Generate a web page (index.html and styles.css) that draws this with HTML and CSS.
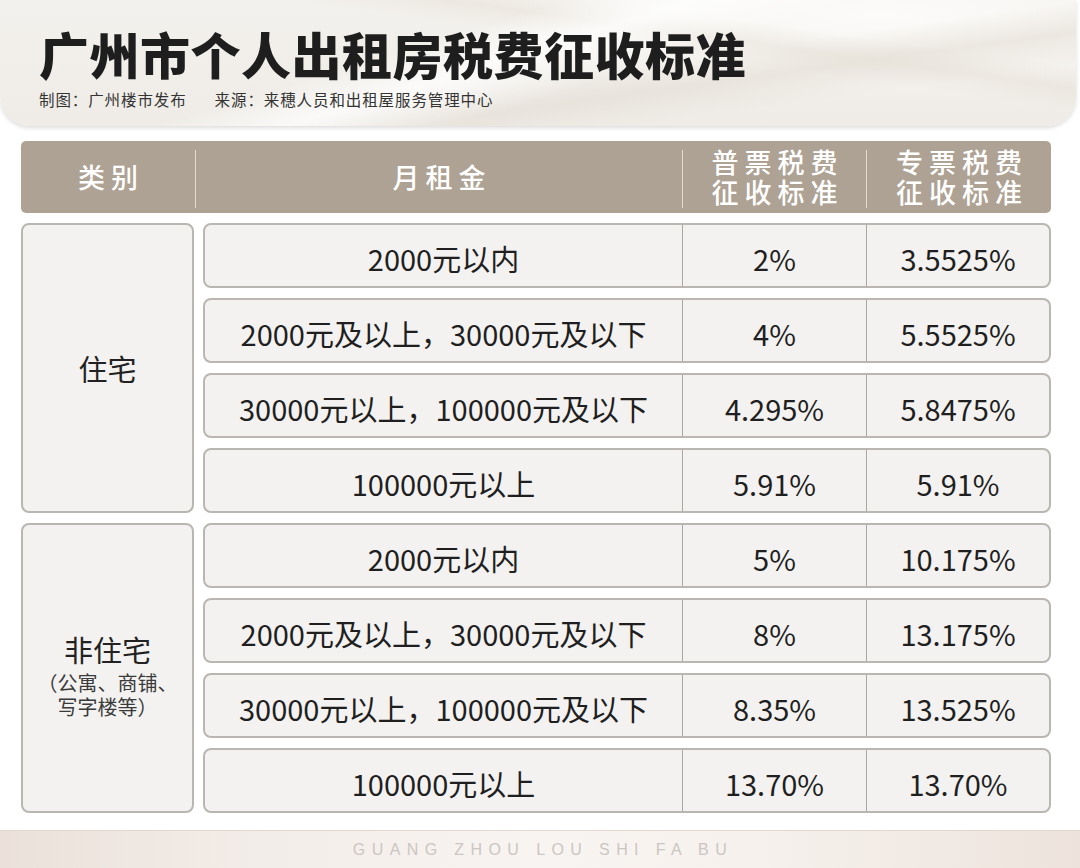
FILE: index.html
```html
<!DOCTYPE html>
<html lang="zh-CN">
<head>
<meta charset="utf-8">
<title>广州市个人出租房税费征收标准</title>
<link rel="stylesheet" href="styles.css">
</head>
<body>
<div class="page">
  <header class="banner">
    <h1 class="title">广州市个人出租房税费征收标准</h1>
    <div class="meta">
      <span>制图：广州楼市发布</span>
      <span>来源：来穗人员和出租屋服务管理中心</span>
    </div>
  </header>

  <main class="table">
    <div class="thead">
      <div class="th">类别</div>
      <div class="th">月租金</div>
      <div class="th">普票税费<br>征收标准</div>
      <div class="th">专票税费<br>征收标准</div>
    </div>

    <section class="group">
      <div class="cat"><div class="cat-name">住宅</div></div>
      <div class="rows">
        <div class="row"><div class="cell">2000元以内</div><div class="cell">2%</div><div class="cell">3.5525%</div></div>
        <div class="row"><div class="cell">2000元及以上，30000元及以下</div><div class="cell">4%</div><div class="cell">5.5525%</div></div>
        <div class="row"><div class="cell">30000元以上，100000元及以下</div><div class="cell">4.295%</div><div class="cell">5.8475%</div></div>
        <div class="row"><div class="cell">100000元以上</div><div class="cell">5.91%</div><div class="cell">5.91%</div></div>
      </div>
    </section>

    <section class="group">
      <div class="cat cat-low">
        <div class="cat-name">非住宅</div>
        <div class="cat-note">（公寓、商铺、<br>写字楼等）</div>
      </div>
      <div class="rows">
        <div class="row"><div class="cell">2000元以内</div><div class="cell">5%</div><div class="cell">10.175%</div></div>
        <div class="row"><div class="cell">2000元及以上，30000元及以下</div><div class="cell">8%</div><div class="cell">13.175%</div></div>
        <div class="row"><div class="cell">30000元以上，100000元及以下</div><div class="cell">8.35%</div><div class="cell">13.525%</div></div>
        <div class="row"><div class="cell">100000元以上</div><div class="cell">13.70%</div><div class="cell">13.70%</div></div>
      </div>
    </section>
  </main>

  <footer class="footer">GUANG ZHOU LOU SHI FA BU</footer>
</div>
</body>
</html>
```

FILE: styles.css
```css
* { box-sizing: border-box; margin: 0; padding: 0; }

html, body {
  width: 1080px;
  height: 868px;
  overflow: hidden;
  background: #ffffff;
}

body {
  font-family: "Noto Sans CJK SC", "Noto Sans", sans-serif;
  color: #222;
}

.page {
  display: flex;
  flex-direction: column;
  height: 868px;
}

/* ---------- banner ---------- */
.banner {
  height: 126px;
  margin-right: 4px;
  padding: 24px 0 0 39px;
  border-bottom-left-radius: 30px;
  border-bottom-right-radius: 30px;
  background:
    linear-gradient(163deg, rgba(255,255,255,0) 38%, rgba(255,255,255,0.75) 47%, rgba(255,255,255,0) 58%),
    linear-gradient(172deg, rgba(255,255,255,0) 55%, rgba(226,220,210,0.55) 66%, rgba(255,255,255,0) 78%),
    linear-gradient(8deg, rgba(255,255,255,0) 60%, rgba(230,224,214,0.5) 68%, rgba(255,255,255,0) 76%),
    radial-gradient(ellipse 420px 90px at 82% 12%, rgba(252,251,249,1) 0%, rgba(252,251,249,0) 100%),
    linear-gradient(180deg, #f3f1ed 0%, #efece7 100%);
  box-shadow: 0 2px 4px rgba(0,0,0,0.14);
}

.title {
  font-size: 50px;
  line-height: 58px;
  font-weight: 900;
  letter-spacing: 0.5px;
  color: #1e1e1e;
}

.meta {
  margin-top: 7px;
  display: flex;
  gap: 28px;
  font-size: 15.5px;
  line-height: 20px;
  letter-spacing: 0.9px;
  color: #333;
}

/* ---------- table ---------- */
.table {
  margin: 15px 0 0 21px;
  width: 1030px;
  display: flex;
  flex-direction: column;
  gap: 10px;
}

.thead {
  height: 72px;
  padding: 9px 0 5px;
  display: grid;
  grid-template-columns: 174px 487px 184px 185px;
  grid-template-rows: 58px;
  background: #aea294;
  border-radius: 5px;
}

.th {
  display: flex;
  align-items: center;
  justify-content: center;
  text-align: center;
  color: #ffffff;
  font-size: 27px;
  line-height: 30px;
  font-weight: 500;
  letter-spacing: 6px;
  padding-left: 6px;
  padding-bottom: 4px;
  min-height: 0;
}

.th + .th {
  border-left: 1px solid #e4dbcf;
}

.group {
  display: grid;
  grid-template-columns: 173px 848px;
  column-gap: 9px;
}

.cat {
  background: #f3f2f0;
  border: 2px solid #bab6b2;
  border-radius: 8px;
  display: flex;
  flex-direction: column;
  align-items: center;
  justify-content: center;
  text-align: center;
}

.cat-low {
  padding-top: 14px;
}

.cat-name {
  font-size: 29px;
  line-height: 36px;
  color: #222;
}

.cat-note {
  margin-top: 4px;
  font-size: 20px;
  line-height: 24px;
  color: #3a3a3a;
}

.rows {
  display: flex;
  flex-direction: column;
  gap: 10px;
}

.row {
  height: 65px;
  display: grid;
  grid-template-columns: 477px 184px 1fr;
  background: #f3f2f0;
  border: 2px solid #bab6b2;
  border-radius: 8px;
}

.cell {
  display: flex;
  align-items: center;
  justify-content: center;
  font-size: 29px;
  line-height: 34px;
  color: #1f1f1f;
  padding-top: 4px;
}

.cell + .cell {
  border-left: 1px solid #aaa6a2;
}

/* ---------- footer ---------- */
.footer {
  margin-top: auto;
  height: 38px;
  display: flex;
  align-items: center;
  justify-content: center;
  border-top: 1px solid #e2d8d0;
  background: linear-gradient(90deg, #ebe1da 0%, #f3ede9 25%, #f8f4f1 50%, #f6f1ed 70%, #ede3dc 100%);
  font-family: "Liberation Sans", Arial, sans-serif;
  font-size: 16px;
  letter-spacing: 6.4px;
  padding-left: 6px;
  color: #cbc6c2;
}
```
